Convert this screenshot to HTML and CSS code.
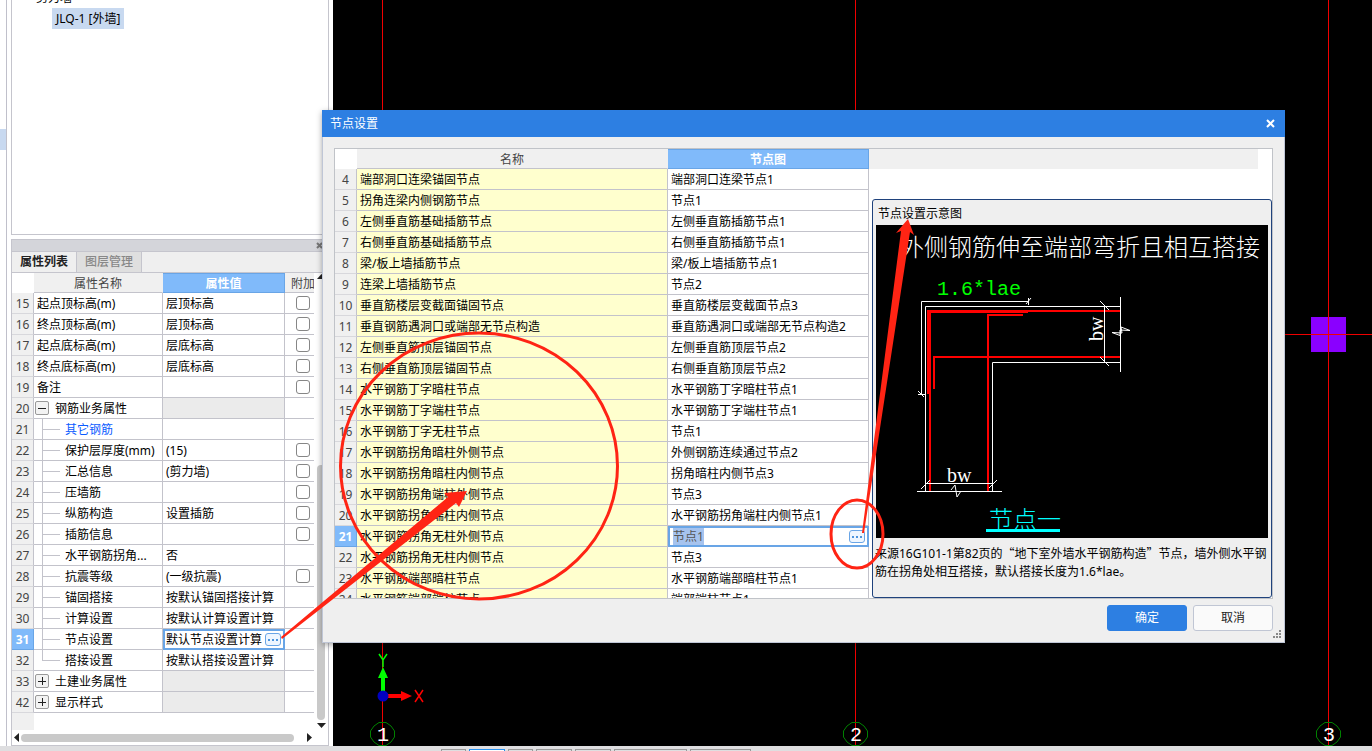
FILE: index.html
```html
<!DOCTYPE html>
<html lang="zh-CN">
<head>
<meta charset="utf-8">
<title>节点设置</title>
<link rel="stylesheet" href="styles.css">
</head>
<body>
<div class="app">
  <div class="workspace">
    <div class="rail"><div class="rail-mark"></div></div>
    <aside class="sidebar">
      <section class="tree">
        <div class="tree-parent">剪力墙</div>
        <div class="tree-item">JLQ-1 [外墙]</div>
      </section>
      <section class="props">
        <div class="props-title"><button class="mini-close" aria-label="关闭面板"><svg width="7" height="7"><path d="M1 1L6 6M6 1L1 6"/></svg></button></div>
        <div class="tabs"><button class="tab active">属性列表</button><button class="tab">图层管理</button></div>
        <div class="props-body">
          <div class="props-grid">
            <table class="grid prop-table">
              <colgroup><col class="c-num"><col class="c-name"><col class="c-val"><col class="c-add"></colgroup>
              <thead><tr><th class="corner"></th><th>属性名称</th><th class="hot">属性值</th><th class="add">附加</th></tr></thead>
              <tbody>
                <tr><th>15</th><td>起点顶标高(m)</td><td>层顶标高</td><td class="chk"><input type="checkbox" aria-label="附加 15"></td></tr>
                <tr><th>16</th><td>终点顶标高(m)</td><td>层顶标高</td><td class="chk"><input type="checkbox" aria-label="附加 16"></td></tr>
                <tr><th>17</th><td>起点底标高(m)</td><td>层底标高</td><td class="chk"><input type="checkbox" aria-label="附加 17"></td></tr>
                <tr><th>18</th><td>终点底标高(m)</td><td>层底标高</td><td class="chk"><input type="checkbox" aria-label="附加 18"></td></tr>
                <tr><th>19</th><td>备注</td><td></td><td class="chk"><input type="checkbox" aria-label="附加 19"></td></tr>
                <tr><th>20</th><td class="tree-cell"><div class="node"><button class="toggle open" aria-label="折叠"></button><span>钢筋业务属性</span></div></td><td class="dim"></td><td></td></tr>
                <tr><th>21</th><td class="tree-cell"><div class="node link"><i class="branch"></i><span>其它钢筋</span></div></td><td></td><td></td></tr>
                <tr><th>22</th><td class="tree-cell"><div class="node"><i class="branch"></i><span>保护层厚度(mm)</span></div></td><td>(15)</td><td class="chk"><input type="checkbox" aria-label="附加 22"></td></tr>
                <tr><th>23</th><td class="tree-cell"><div class="node"><i class="branch"></i><span>汇总信息</span></div></td><td>(剪力墙)</td><td class="chk"><input type="checkbox" aria-label="附加 23"></td></tr>
                <tr><th>24</th><td class="tree-cell"><div class="node"><i class="branch"></i><span>压墙筋</span></div></td><td></td><td class="chk"><input type="checkbox" aria-label="附加 24"></td></tr>
                <tr><th>25</th><td class="tree-cell"><div class="node"><i class="branch"></i><span>纵筋构造</span></div></td><td>设置插筋</td><td class="chk"><input type="checkbox" aria-label="附加 25"></td></tr>
                <tr><th>26</th><td class="tree-cell"><div class="node"><i class="branch"></i><span>插筋信息</span></div></td><td></td><td class="chk"><input type="checkbox" aria-label="附加 26"></td></tr>
                <tr><th>27</th><td class="tree-cell"><div class="node"><i class="branch"></i><span>水平钢筋拐角...</span></div></td><td>否</td><td></td></tr>
                <tr><th>28</th><td class="tree-cell"><div class="node"><i class="branch"></i><span>抗震等级</span></div></td><td>(一级抗震)</td><td class="chk"><input type="checkbox" aria-label="附加 28"></td></tr>
                <tr><th>29</th><td class="tree-cell"><div class="node"><i class="branch"></i><span>锚固搭接</span></div></td><td>按默认锚固搭接计算</td><td></td></tr>
                <tr><th>30</th><td class="tree-cell"><div class="node"><i class="branch"></i><span>计算设置</span></div></td><td>按默认计算设置计算</td><td></td></tr>
                <tr class="current"><th>31</th><td class="tree-cell"><div class="node"><i class="branch"></i><span>节点设置</span></div></td><td class="editing"><div class="editor"><input type="text" class="edit-text" aria-label="节点设置" value="默认节点设置计算"><button class="more" aria-label="更多"><svg width="10" height="2"><path d="M0 1H10"/></svg></button></div></td><td></td></tr>
                <tr><th>32</th><td class="tree-cell"><div class="node"><i class="branch last"></i><span>搭接设置</span></div></td><td>按默认搭接设置计算</td><td></td></tr>
                <tr><th>33</th><td class="tree-cell"><div class="node"><button class="toggle" aria-label="展开"></button><span>土建业务属性</span></div></td><td class="dim"></td><td></td></tr>
                <tr><th>42</th><td class="tree-cell"><div class="node"><button class="toggle" aria-label="展开"></button><span>显示样式</span></div></td><td class="dim"></td><td></td></tr>
              </tbody>
            </table>
            <div class="gutter"></div>
          </div>
          <div class="vbar">
            <svg width="9" height="6"><path d="M0 5L4.500 0L9 5Z"/></svg>
            <div class="vtrack"><div class="vthumb"></div></div>
            <svg width="9" height="6"><path d="M0 0H9L4.500 5Z"/></svg>
          </div>
        </div>
        <div class="hbar">
          <svg width="5" height="9"><path d="M5 0V9L0 4.500Z"/></svg>
          <div class="hthumb"></div>
          <svg width="5" height="9"><path d="M0 0V9L5 4.500Z"/></svg>
        </div>
      </section>
    </aside>
    <main class="canvas">
      <svg class="plan" aria-hidden="true">
        <rect x="978" y="317" width="35" height="35" fill="#8a00ff"/>
        <path class="axis" d="M49.500 0V746M522.500 0V746M995.500 0V746M0 334.500H1900"/>
        <path d="M48 691V678H45L50 667L55 678H52V691Z" fill="#00ff00"/>
        <path d="M52 694V698H68V701L79 696L68 691V694Z" fill="#ff0000"/>
        <circle cx="50" cy="696" r="5.500" fill="#0000c0"/>
        <path d="M46 654L50 660L54 654M50 660V667" fill="none" stroke="#00ff00" stroke-width="1.500"/>
        <path d="M82 690L90 702M90 690L82 702" fill="none" stroke="#ff0000" stroke-width="1.500"/>
        <g fill="none" stroke="#008000">
          <path id="bubble" d="M46 722.500H53L58 726L61.500 731V737L58 742L53 745.500H46L41 742L37.500 737V731L41 726Z"/>
          <use href="#bubble" x="473"/>
          <use href="#bubble" x="946"/>
        </g>
        <g class="axis-no"><text x="50" y="741">1</text><text x="523" y="741">2</text><text x="996" y="741">3</text></g>
      </svg>
    </main>
  </div>
  <footer class="status"><i class="s1"></i><i class="s2 on"></i><i class="s1"></i><i class="s2"></i><i class="s2"></i><i class="s3"></i><i class="s4"></i></footer>
</div>

<div class="dialog" role="dialog" aria-label="节点设置">
  <header class="dialog-title"><span>节点设置</span><button class="close" aria-label="关闭"><svg width="9" height="9"><path d="M1 1L8 8M8 1L1 8"/></svg></button></header>
  <div class="dialog-body">
    <div class="node-list">
      <table class="grid node-table">
        <colgroup><col class="c-num"><col class="c-title"><col class="c-pic"></colgroup>
        <thead><tr><th class="corner"></th><th>名称</th><th class="hot">节点图</th></tr></thead>
        <tbody>
          <tr><th>4</th><td>端部洞口连梁锚固节点</td><td>端部洞口连梁节点1</td></tr>
          <tr><th>5</th><td>拐角连梁内侧钢筋节点</td><td>节点1</td></tr>
          <tr><th>6</th><td>左侧垂直筋基础插筋节点</td><td>左侧垂直筋插筋节点1</td></tr>
          <tr><th>7</th><td>右侧垂直筋基础插筋节点</td><td>右侧垂直筋插筋节点1</td></tr>
          <tr><th>8</th><td>梁/板上墙插筋节点</td><td>梁/板上墙插筋节点1</td></tr>
          <tr><th>9</th><td>连梁上墙插筋节点</td><td>节点2</td></tr>
          <tr><th>10</th><td>垂直筋楼层变截面锚固节点</td><td>垂直筋楼层变截面节点3</td></tr>
          <tr><th>11</th><td>垂直钢筋遇洞口或端部无节点构造</td><td>垂直筋遇洞口或端部无节点构造2</td></tr>
          <tr><th>12</th><td>左侧垂直筋顶层锚固节点</td><td>左侧垂直筋顶层节点2</td></tr>
          <tr><th>13</th><td>右侧垂直筋顶层锚固节点</td><td>右侧垂直筋顶层节点2</td></tr>
          <tr><th>14</th><td>水平钢筋丁字暗柱节点</td><td>水平钢筋丁字暗柱节点1</td></tr>
          <tr><th>15</th><td>水平钢筋丁字端柱节点</td><td>水平钢筋丁字端柱节点1</td></tr>
          <tr><th>16</th><td>水平钢筋丁字无柱节点</td><td>节点1</td></tr>
          <tr><th>17</th><td>水平钢筋拐角暗柱外侧节点</td><td>外侧钢筋连续通过节点2</td></tr>
          <tr><th>18</th><td>水平钢筋拐角暗柱内侧节点</td><td>拐角暗柱内侧节点3</td></tr>
          <tr><th>19</th><td>水平钢筋拐角端柱外侧节点</td><td>节点3</td></tr>
          <tr><th>20</th><td>水平钢筋拐角端柱内侧节点</td><td>水平钢筋拐角端柱内侧节点1</td></tr>
          <tr class="current"><th>21</th><td>水平钢筋拐角无柱外侧节点</td><td class="editing"><div class="editor"><input type="text" class="edit-text picked" aria-label="节点图" value="节点1"><button class="more" aria-label="选择节点"><svg width="10" height="2"><path d="M0 1H10"/></svg></button></div></td></tr>
          <tr><th>22</th><td>水平钢筋拐角无柱内侧节点</td><td>节点3</td></tr>
          <tr><th>23</th><td>水平钢筋端部暗柱节点</td><td>水平钢筋端部暗柱节点1</td></tr>
          <tr><th>24</th><td>水平钢筋端部端柱节点</td><td>端部端柱节点1</td></tr>
        </tbody>
      </table>
      <div class="side">
        <div class="side-head"></div>
        <section class="preview">
          <h2>节点设置示意图</h2>
          <svg class="drawing" viewBox="0 0 392 313" role="img" aria-label="节点一">
            <rect width="392" height="313" fill="#000"/>
            <text class="cad" x="24" y="31" fill="#fff">外侧钢筋伸至端部弯折且相互搭接</text>
            <text class="cad-latin" x="61" y="70" fill="#00ff00">1.6*lae</text>
            <g fill="none" stroke="#ff0000" stroke-width="2">
              <path d="M54 266V86H244M112 266V90H147M244 132H58V164"/>
              <path stroke-width="4" d="M53 169V86"/>
              <path stroke-width="3" d="M51 86.500H152"/>
            </g>
            <g class="white">
              <path d="M49.500 266V81.500H244.500M116.500 266V137.500H244.500"/>
              <path d="M152.500 76.500H45.500V169.500M152.500 73V80M155 73L150 79M42 169.500H49M42 166L48 172"/>
              <path d="M244.500 72V147M254 105.500L245 102L246 108L236 107.500L244 110.500L244 105L254 105.500M228.500 80V137M224 76L233 85M224 132L233 141"/>
              <path d="M41 266.500H126M49 258.500H117M45 264L54 255M113 263L121 255M75 265L79 260L81 272L85 266"/>
            </g>
            <text class="cad-dim" x="71" y="257" fill="#fff">bw</text>
            <text class="cad-dim" transform="translate(227 116) rotate(-90)" fill="#fff">bw</text>
            <text class="cad" x="113" y="303" fill="#00ffff">节点一</text>
            <rect x="110" y="304" width="74" height="3" fill="#00ffff"/>
          </svg>
          <p>来源16G101-1第82页的<span class="wide">“</span>地下室外墙水平钢筋构造<span class="wide">”</span>节点，墙外侧水平钢筋在拐角处相互搭接，默认搭接长度为1.6*lae。</p>
        </section>
      </div>
    </div>
    <div class="actions"><button class="btn primary">确定</button><button class="btn">取消</button></div>
  </div>
  <svg class="grip" width="9" height="9" aria-hidden="true"><path d="M6 0h2v2h-2zM3 3h2v2h-2zM6 3h2v2h-2zM0 6h2v2h-2zM3 6h2v2h-2zM6 6h2v2h-2z"/></svg>
</div>

<svg class="marks" aria-hidden="true">
  <g fill="none" stroke="#ff2414" stroke-width="3">
    <ellipse cx="479" cy="466" rx="138.500" ry="133"/>
    <ellipse cx="857" cy="534" rx="26" ry="34"/>
  </g>
  <g fill="#ff2414">
    <path d="M281 637L448 497L444 493L467 491L459 507L456 503L282 639Z"/>
    <path d="M862 533L901 231L896 233L908 219L914 235L910 232L864 533Z"/>
  </g>
</svg>
</body>
</html>
```

FILE: styles.css
```css
* { box-sizing: border-box; }
html, body { height: 100%; margin: 0; }
body {
  position: relative;
  overflow: hidden;
  font: 12px/20px "Noto Sans", "Noto Sans CJK SC", sans-serif;
  color: #000;
  background: #fff;
}
button, input { font: inherit; color: inherit; margin: 0; padding: 0; }
button { border: 0; background: none; }
svg { display: block; }

.app { display: flex; flex-direction: column; height: 100%; }
.workspace { display: flex; flex: 1; min-height: 0; }
.rail { width: 7px; border-right: 1px solid #c0c0cb; padding-top: 129px; }
.rail-mark { height: 21px; background: #c8d9f0; }
.sidebar { display: flex; flex-direction: column; gap: 4px; width: 318px; margin: 0 4px; }
.tree { height: 235px; border: 1px solid #c5c5cd; border-top: 0; overflow: hidden; }
.tree-parent { height: 8px; padding-left: 24px; line-height: 20px; display: flex; align-items: flex-end; }
.tree-item { display: inline-block; margin-left: 40px; padding: 0 4px; line-height: 21px; background: #c8d9f0; }

.props { display: flex; flex-direction: column; flex: 1; min-height: 0; border: 1px solid #c5c5cd; }
.props-title { display: flex; justify-content: flex-end; align-items: center; height: 12px; padding-right: 5px; background: #d4d5da; border-bottom: 1px solid #c5c5cd; }
.mini-close svg, .close svg { fill: none; stroke: #777; stroke-width: 2; }
.tabs { display: flex; height: 21px; background: #efefef; border-bottom: 1px solid #c5c5cd; }
.tab { width: 65px; border-right: 1px solid #c5c5cd; line-height: 20px; background: #dfdfdf; color: #888; font-weight: 500; }
.tab.active { background: #efefef; color: #222; font-weight: 600; }
.props-body { display: flex; flex: 1; min-height: 0; }
.props-grid { display: flex; flex-direction: column; width: 302px; overflow: hidden; }
.gutter { flex: 1; width: 22px; background: #f0f0f0; }

.grid { border-collapse: separate; border-spacing: 0; table-layout: fixed; }
.grid th, .grid td { height: 21px; padding: 2px 3px 0; border: 0 solid #c3c3cb; border-width: 0 1px 1px 0; line-height: 18px; white-space: nowrap; overflow: hidden; text-align: left; }
.grid thead th { height: 20px; line-height: 17px; background: #f0f0f0; color: #444; font-weight: 400; text-align: center; border-right-color: #f0f0f0; }
.grid thead .corner { background: #fff; border-color: #fff; }
.grid thead .hot { padding-top: 1px; background: #80bafa; color: #fff; font-weight: 700; border: 1px solid #69a5e6; border-left-width: 0; }
.grid tbody th { padding: 2px 0 0; background: #f0f0f0; color: #444; font-weight: 400; text-align: center; border-bottom-color: #d8d8dc; }
.grid tbody .current th { background: #80bafa; color: #fff; font-weight: 700; border-color: #69a5e6; }
.c-num { width: 22px; }
.c-name { width: 129px; }
.c-val { width: 122px; }
.c-add { width: 29px; }
.c-title { width: 311px; }
.c-pic { width: 201px; }
.prop-table { width: 302px; }
.prop-table td:last-child, .prop-table th.add { border-right: 0; }
.grid th.add { padding: 2px 0 0 6px; text-align: left; }
.grid .dim { background: #ebebeb; }
.grid .chk { padding: 3px 0 0 11px; line-height: 0; vertical-align: top; }
.chk input { appearance: none; width: 14px; height: 14px; border: 1px solid #868686; border-radius: 3px; background: #fff; }
.grid .tree-cell { padding: 0; }
.node { display: flex; align-items: center; height: 20px; }
.node span { padding-top: 2px; }
.link { color: #0b5cff; }
.branch { flex: none; width: 18px; height: 20px; margin: 0 5px 0 8px; border-left: 1px solid #c3c3cb; background: linear-gradient(#c3c3cb, #c3c3cb) 0 10px / 18px 1px no-repeat; }
.branch.last { height: 11px; align-self: flex-start; }
.toggle { flex: none; width: 14px; height: 14px; margin: 0 6px 0 1px; border: 1px solid #999; border-radius: 2px; background: linear-gradient(#222, #222) center / 8px 1px no-repeat, linear-gradient(#222, #222) center / 1px 8px no-repeat, #f3f3f3; }
.toggle.open { background: linear-gradient(#222, #222) center / 8px 1px no-repeat, #f3f3f3; }
.grid td.editing { padding: 0; border: 0; background: #fff; }
.editor { display: flex; align-items: center; height: 21px; padding: 0 2px 0 1px; border: 2px solid #69a5e6; }
.edit-text { flex: 1; min-width: 0; height: 17px; border: 0; outline: 0; background: none; line-height: 17px; }
.edit-text.picked { flex: none; width: 31px; background: #a6c3ee; color: #555; }
.more { flex: none; display: flex; justify-content: center; align-items: center; width: 16px; height: 13px; border: 1px solid #69a5e6; border-radius: 3px; background: #eef6ff; }
.more svg { stroke: #4c94dd; stroke-width: 2; stroke-dasharray: 2 2; }
.node-table .editor { padding-left: 3px; }
.node-table .more { margin-left: auto; }

.vbar { display: flex; flex-direction: column; align-items: center; width: 14px; padding: 1px 0; }
.vbar svg, .hbar svg { flex: none; fill: #222; }
.vtrack { flex: 1; display: flex; flex-direction: column; justify-content: flex-end; padding-bottom: 3px; }
.vthumb { width: 8px; height: 58%; background: #c9c9c9; border-radius: 4px; }
.hbar { display: flex; align-items: center; height: 15px; padding: 0 16px 0 2px; gap: 2px; }
.hthumb { flex: 1; height: 8px; margin: 0 11px 0 0; background: #c9c9c9; border-radius: 4px; }

.canvas { flex: 1; min-width: 0; background: #000; overflow: hidden; }
.plan { width: 100%; height: 100%; }
.axis { fill: none; stroke: #f00000; }
.axis-no { fill: #fff; font: 20px "Liberation Mono", monospace; text-anchor: middle; }
.status { display: flex; gap: 3px; height: 5px; padding: 3px 0 0 441px; background: #dedee0; overflow: hidden; }
.status i { height: 6px; border: 1px solid #999; }
.status .on { border-color: #2590f0; background: #fff; }
.s1 { width: 25px; }
.s2 { width: 36px; }
.s3 { width: 73px; }
.s4 { width: 61px; }

.dialog { position: absolute; left: 322px; top: 110px; width: 963px; background: #efefef; border: 1px solid #bfc6d6; border-top: 0; box-shadow: 0 2px 6px rgba(0, 0, 0, .35); }
.dialog-title { display: flex; justify-content: space-between; align-items: center; height: 27px; margin: 0 -1px; padding: 0 10px 0 8px; background: #2d7fe2; color: #fff; }
.close svg { stroke: #fff; }
.dialog-body { padding: 11px; }
.node-list { display: flex; height: 451px; border: 1px solid #c0c3c8; background: #fff; overflow: hidden; }
.node-table { flex: none; width: 534px; height: 461px; }
.node-table td:nth-child(2) { background: #ffffce; }
.side { flex: 1; min-width: 0; display: flex; flex-direction: column; padding-left: 3px; }
.side-head { height: 20px; margin: 0 14px 0 -3px; background: #f0f0f0; }
.preview { flex: 1; margin-top: 30px; padding: 0 3px; border: 1px solid #1f427c; border-radius: 3px; background: #efefef; }
.preview h2 { margin: 0; padding: 3px 2px 0; font: inherit; height: 25px; line-height: 22px; }
.drawing { width: 100%; }
.cad { font: 300 24px "Noto Sans CJK SC", sans-serif; }
.cad-latin { font: 20px "Liberation Mono", monospace; }
.cad-dim { font: 20px "Liberation Serif", serif; }
.white { fill: none; stroke: #fff; }
.preview p { margin: 6px -3px 0 -1px; line-height: 18px; }
.wide { font-family: "Noto Sans CJK SC", sans-serif; }
.actions { display: flex; justify-content: flex-end; gap: 6px; padding-top: 6px; }
.btn { width: 80px; height: 26px; border: 1px solid #c0c6d4; border-radius: 3px; background: #fafafa; color: #222; }
.btn.primary { background: #2d7fe2; border-color: #2d7fe2; color: #fff; }
.grip { position: absolute; right: 2px; bottom: 3px; fill: #888; }
.marks { position: absolute; inset: 0; width: 100%; height: 100%; pointer-events: none; }
```
